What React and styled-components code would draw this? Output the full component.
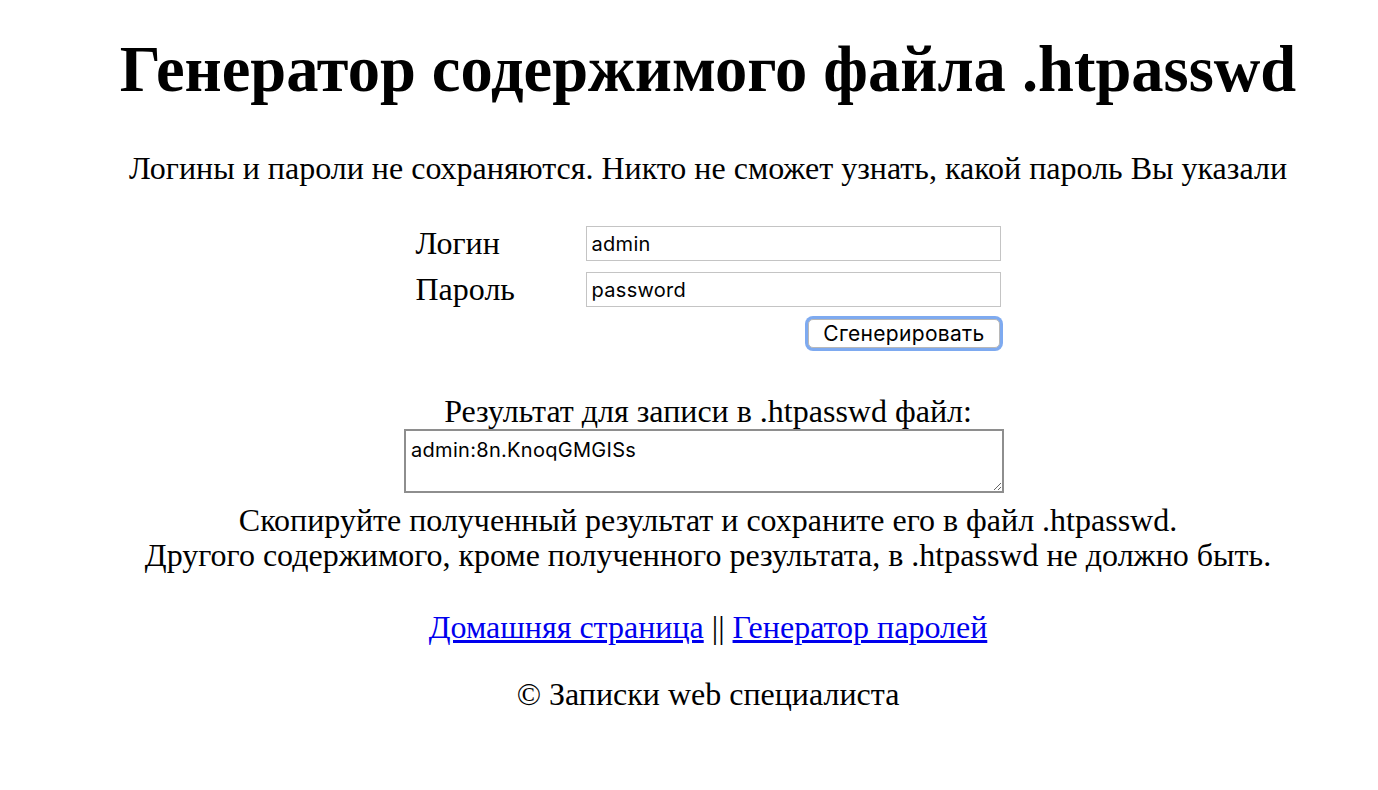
import React from "react";
import styled, { createGlobalStyle } from "styled-components";

const GlobalStyle = createGlobalStyle`
  html, body {
    margin: 0;
    padding: 0;
    background: #ffffff;
  }
  body {
    font-family: "Liberation Serif", "Times New Roman", serif;
    color: #000000;
  }
`;

const controlFont = `
  font-family: Inter, "Liberation Sans", Arial, sans-serif;
  font-size: 20px;
  letter-spacing: 0.3px;
  color: #000000;
`;

const Page = styled.main`
  padding: 33px 0 60px 38px;
  text-align: center;
  font-size: 32px;
  line-height: 35px;
`;

const Title = styled.h1`
  margin: 0;
  font-size: 64.5px;
  line-height: 74px;
  font-weight: bold;
`;

const Lead = styled.p`
  margin: 44px 0 0;
`;

const FormTable = styled.div`
  margin: 40px auto 0;
  width: 585px;
  display: grid;
  grid-template-columns: 170px 415px;
  row-gap: 11px;
  text-align: left;
`;

const Label = styled.label`
  align-self: center;
`;

const Field = styled.input`
  box-sizing: border-box;
  width: 415px;
  height: 35px;
  margin: 0;
  padding: 1px 5px 0;
  border: 1px solid #c4c4c4;
  background: #ffffff;
  outline: none;
  ${controlFont}
`;

const ButtonCell = styled.div`
  grid-column: 1 / 3;
  display: flex;
  justify-content: flex-end;
`;

const Button = styled.button`
  box-sizing: border-box;
  height: 29px;
  margin: 1px 1px 0 0;
  padding: 0 14px;
  border: 1px solid #b8b8b8;
  border-radius: 5px;
  background: #ffffff;
  box-shadow: 0 0 0 3px #7eaaf0;
  line-height: 27px;
  ${controlFont}
  font-size: 21px;
`;

const ResultLabel = styled.p`
  margin: 46px 0 0;
`;

const ResultBox = styled.textarea`
  display: block;
  box-sizing: border-box;
  width: 600px;
  height: 64px;
  margin: 0 auto;
  position: relative;
  left: -4px;
  padding: 7px 5px;
  border: 2px solid #8e8e8e;
  line-height: 24px;
  resize: both;
  outline: none;
  ${controlFont}
`;

const Note = styled.p`
  margin: 10px 0 0;
`;

const Links = styled.p`
  margin: 37px 0 0;
`;

const NavLink = styled.a`
  color: #0000ee;
  text-decoration: underline;
`;

const Copyright = styled.p`
  margin: 32px 0 0;
`;

export default function App() {
  return (
    <>
      <GlobalStyle />
      <Page>
        <Title>Генератор содержимого файла .htpasswd</Title>
        <Lead>
          Логины и пароли не сохраняются. Никто не сможет узнать, какой пароль
          Вы указали
        </Lead>
        <FormTable>
          <Label htmlFor="login">Логин</Label>
          <Field id="login" defaultValue="admin" />
          <Label htmlFor="pass">Пароль</Label>
          <Field id="pass" defaultValue="password" />
          <ButtonCell>
            <Button type="button">Сгенерировать</Button>
          </ButtonCell>
        </FormTable>
        <ResultLabel>Результат для записи в .htpasswd файл:</ResultLabel>
        <ResultBox readOnly defaultValue="admin:8n.KnoqGMGISs" />
        <Note>
          Скопируйте полученный результат и сохраните его в файл .htpasswd.
          <br />
          Другого содержимого, кроме полученного результата, в .htpasswd не
          должно быть.
        </Note>
        <Links>
          <NavLink href="#home">Домашняя страница</NavLink> ||{" "}
          <NavLink href="#passwords">Генератор паролей</NavLink>
        </Links>
        <Copyright>© Записки web специалиста</Copyright>
      </Page>
    </>
  );
}
